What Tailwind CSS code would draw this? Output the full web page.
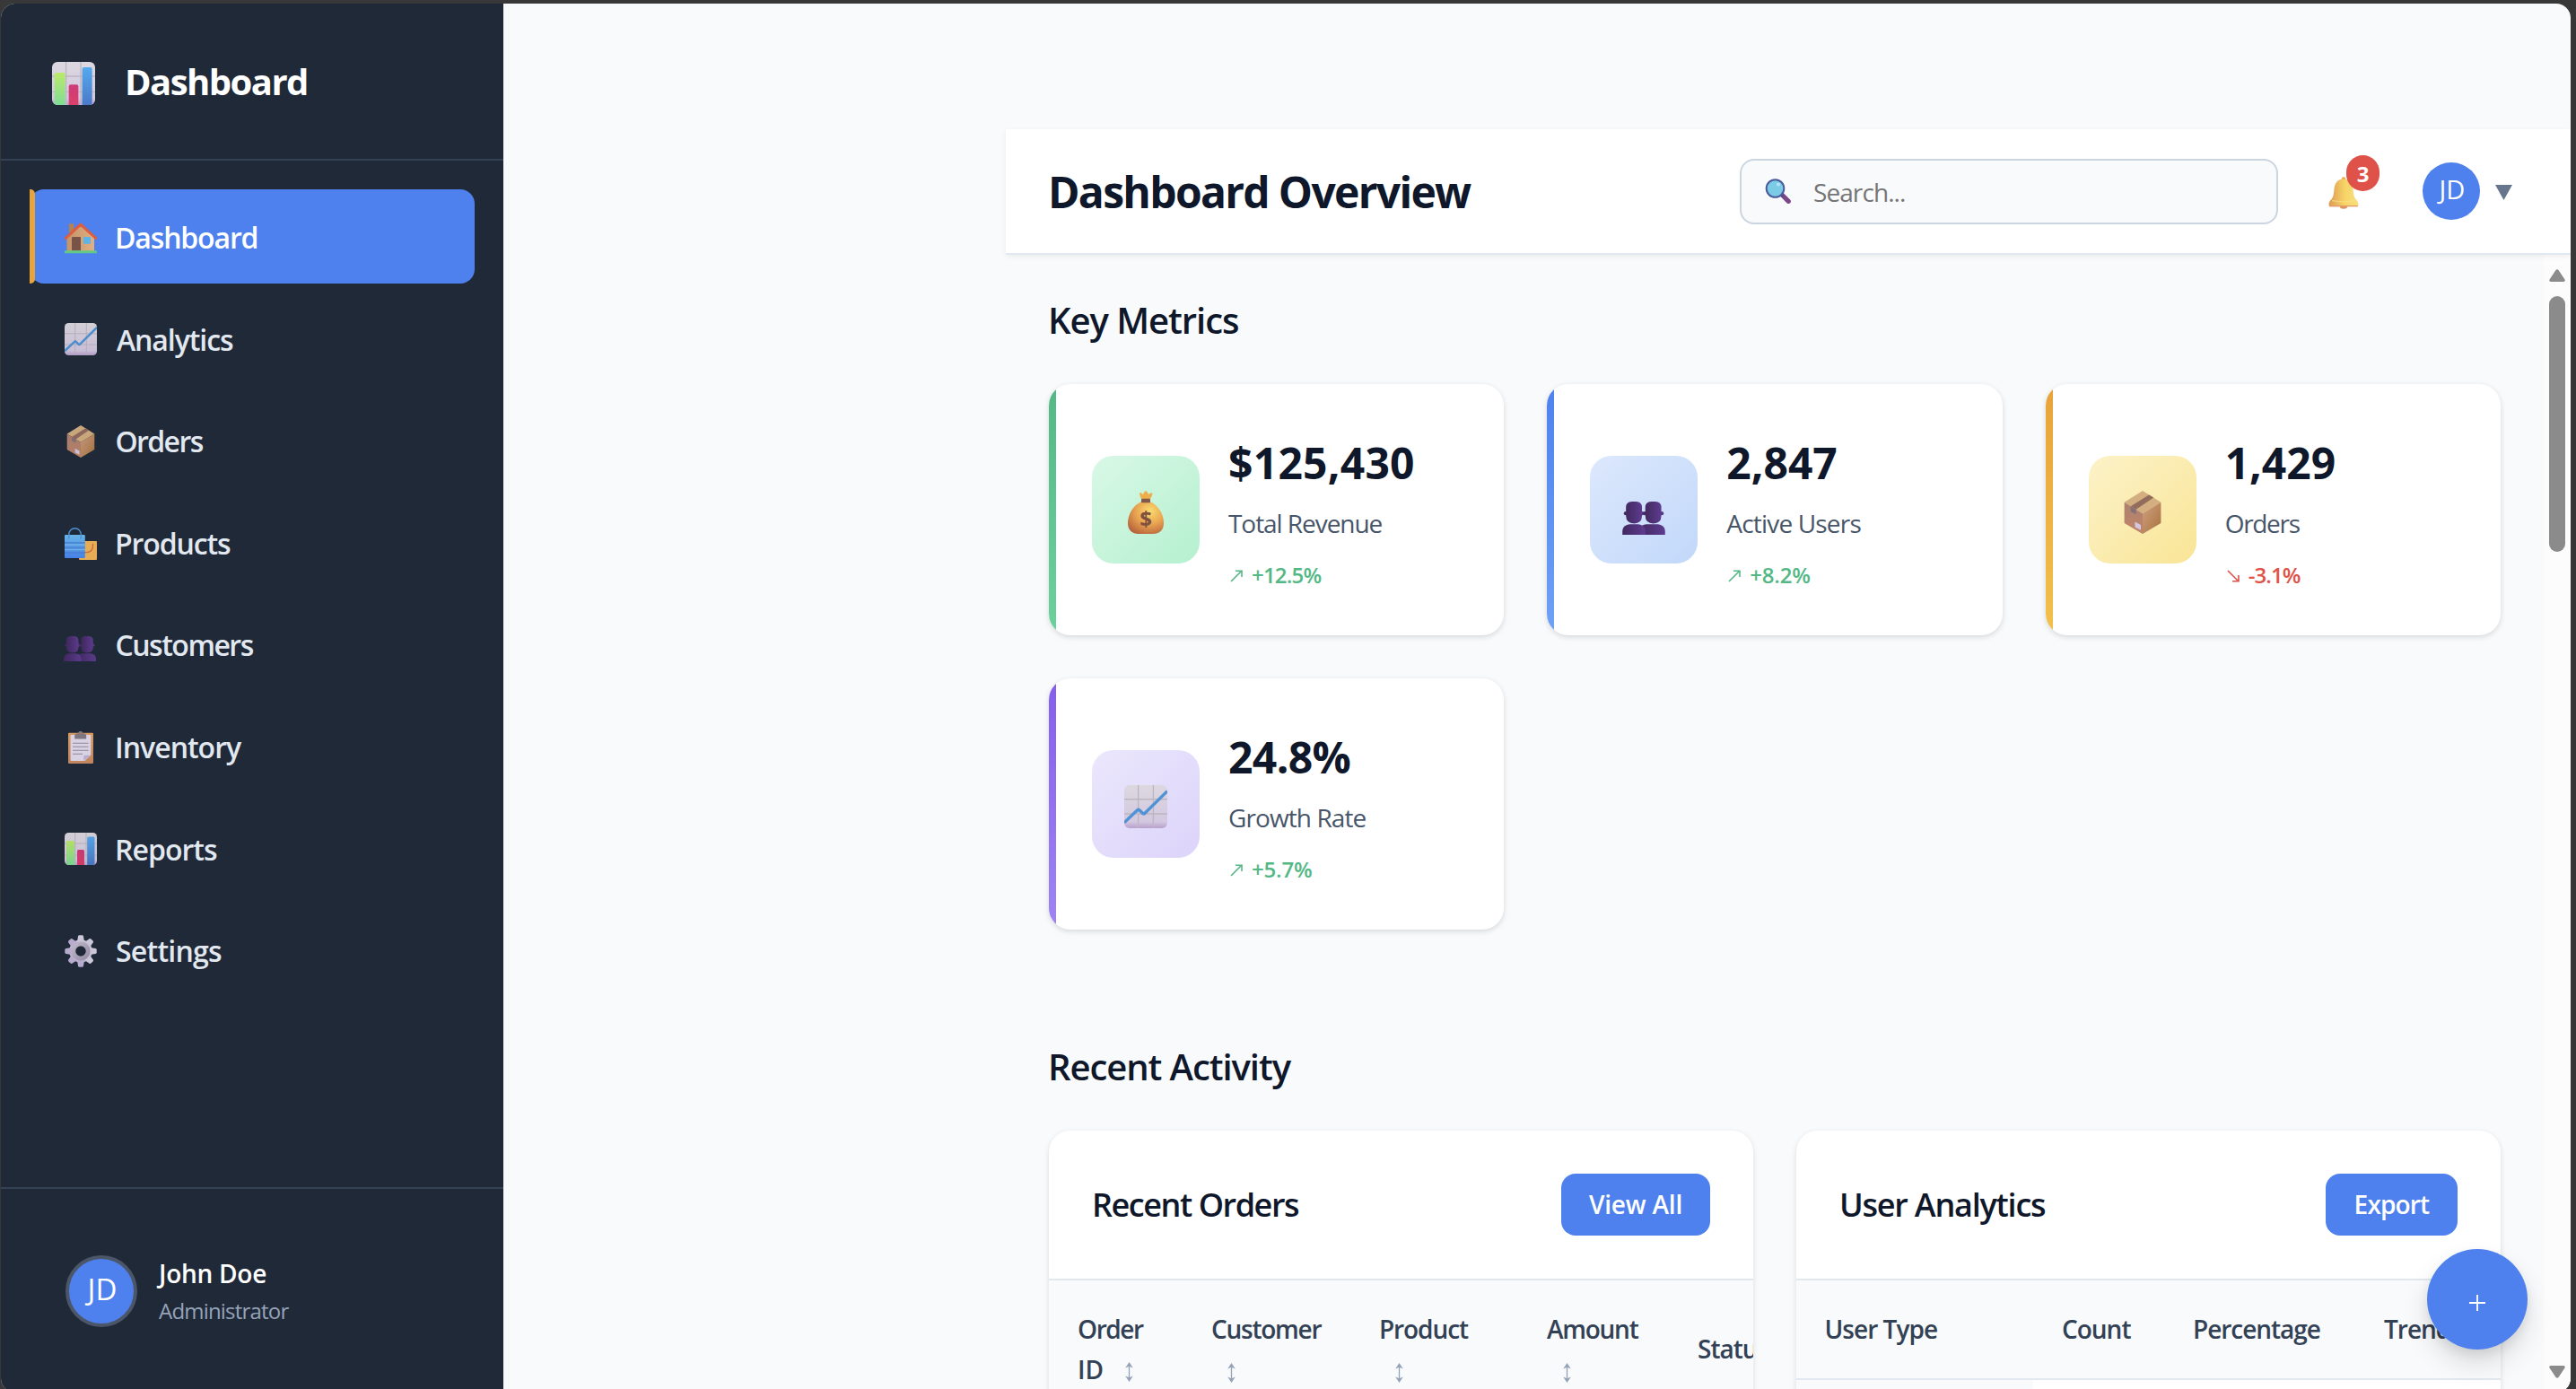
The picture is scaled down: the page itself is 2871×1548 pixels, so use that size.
<!DOCTYPE html>
<html lang="en">
<head>
<meta charset="utf-8">
<title>Dashboard</title>
<script src="https://cdn.jsdelivr.net/npm/@tailwindcss/browser@4"></script>
</head>
<body class="h-[1548px] w-[2871px] overflow-hidden bg-[#383838] pt-1 pl-px font-['Open_Sans','Noto_Sans',sans-serif] leading-[1.6] text-[#0f172a]">

<!-- Shared icon symbols -->
<svg width="0" height="0" class="absolute" aria-hidden="true">
  <defs>
    <linearGradient id="paper" x1="0" y1="0" x2="0" y2="1"><stop offset="0" stop-color="#dcd8df"/><stop offset=".85" stop-color="#d3c8e0"/><stop offset="1" stop-color="#b8a0cc"/></linearGradient>
    <linearGradient id="green" x1="0" y1="0" x2="0" y2="1"><stop offset="0" stop-color="#bbe96a"/><stop offset="1" stop-color="#7fdc95"/></linearGradient>
    <linearGradient id="red" x1="0" y1="0" x2="0" y2="1"><stop offset="0" stop-color="#cf3b78"/><stop offset="1" stop-color="#dc3f6a"/></linearGradient>
    <linearGradient id="blue" x1="0" y1="0" x2="0" y2="1"><stop offset="0" stop-color="#56a9ee"/><stop offset="1" stop-color="#4a79c9"/></linearGradient>
    <linearGradient id="wall" x1="0" y1="0" x2="1" y2="0"><stop offset="0" stop-color="#c39468"/><stop offset="1" stop-color="#e0b083"/></linearGradient>
    <linearGradient id="bag" x1="0" y1="0" x2="0" y2="1"><stop offset="0" stop-color="#6cbcf0"/><stop offset="1" stop-color="#4a86f0"/></linearGradient>
    <linearGradient id="boxL" x1="0" y1="0" x2="0" y2="1"><stop offset="0" stop-color="#ad8270"/><stop offset="1" stop-color="#c08468"/></linearGradient>
    <linearGradient id="boxR" x1="0" y1="0" x2="1" y2="1"><stop offset="0" stop-color="#cf9f80"/><stop offset="1" stop-color="#a9733f"/></linearGradient>
    <linearGradient id="person" x1="0" y1="0" x2="1" y2="0"><stop offset="0" stop-color="#42295f"/><stop offset="1" stop-color="#5d3b90"/></linearGradient>
    <linearGradient id="gear" x1="0" y1="0" x2="0" y2="1"><stop offset="0" stop-color="#d9d3e2"/><stop offset="1" stop-color="#bdafd6"/></linearGradient>
    <linearGradient id="gearIn" x1="0" y1="0" x2="1" y2="1"><stop offset="0" stop-color="#c6bfd0"/><stop offset="1" stop-color="#9d94ac"/></linearGradient>
    <linearGradient id="bell" x1="0" y1="0" x2="1" y2="0"><stop offset="0" stop-color="#dd9a52"/><stop offset=".55" stop-color="#f7d468"/><stop offset="1" stop-color="#f8e07c"/></linearGradient>
    <linearGradient id="board" x1="0" y1="0" x2="0" y2="1"><stop offset="0" stop-color="#e2a264"/><stop offset="1" stop-color="#c98a62"/></linearGradient>
    <radialGradient id="money" cx=".62" cy=".3" r=".8"><stop offset="0" stop-color="#fadc70"/><stop offset=".5" stop-color="#e9a450"/><stop offset="1" stop-color="#b4603c"/></radialGradient>
  </defs>
  <symbol id="i-bars" viewBox="0 0 36 36">
    <rect width="36" height="36" rx="4.5" fill="url(#paper)"/>
    <path d="M11.7 0v36M24 0v36M0 12h36M0 25h36" stroke="#bcb6c2" stroke-width="1"/>
    <path d="M2 10.5a1.5 1.5 0 0 1 1.5-1.5h6a1.5 1.5 0 0 1 1.5 1.5V36H4a2 2 0 0 1-2-2z" fill="url(#green)"/>
    <path d="M14 20.5a1.5 1.5 0 0 1 1.5-1.5h5a1.5 1.5 0 0 1 1.5 1.5V36h-8z" fill="url(#red)"/>
    <path d="M25.2 6a1.5 1.5 0 0 1 1.5-1.5h5.3a1.5 1.5 0 0 1 1.5 1.5v28a2 2 0 0 1-2 2h-6.3z" fill="url(#blue)"/>
  </symbol>
  <symbol id="i-line" viewBox="0 0 36 36">
    <rect width="36" height="36" rx="4.5" fill="url(#paper)"/>
    <path d="M11.7 0v36M24.3 0v36M0 11.8h36M0 24h36" stroke="#bcb6c2" stroke-width="1"/>
    <path d="M0 31.3 11 20.800q.8-.8 1.600 0l2.900 2.800q.8.800 1.600 0L36 5" fill="none" stroke="#4f93d6" stroke-width="2.500"/>
  </symbol>
  <symbol id="i-home" viewBox="0 0 36 36">
    <path d="M5 2q0-.8.800-.8h3.700q.8 0 .8.800v9H5z" fill="#b5814f"/>
    <path d="M2.500 15 18 2l15 13v18H2.500z" fill="url(#wall)"/>
    <rect x="8" y="16" width="10" height="15.500" rx="1" fill="#7a5348"/>
    <rect x="21" y="16" width="8" height="7.800" rx=".8" fill="#5bb4ea"/>
    <path d="M1.200 17.500 17.900 2.200 34.800 17.500" fill="none" stroke="#df5c3d" stroke-width="3" stroke-linecap="round" stroke-linejoin="round"/>
    <rect y="31.300" width="36" height="2.900" rx="1" fill="#63c987"/>
  </symbol>
  <symbol id="i-box" viewBox="0 0 36 36">
    <path d="M18 0 33.300 9.500 18 19 2.700 9.500z" fill="#d3ae80"/>
    <path d="M2.700 9.500 18 19v17L2.700 27z" fill="url(#boxL)"/>
    <path d="M33.300 9.500 18 19v17l15.300-9z" fill="url(#boxR)"/>
    <path d="M23.300 3.300 27.200 5.600 12.500 15.600 8 13z" fill="#936c5c"/>
    <path d="M8 13l4.500 2.600v4L8 17.300z" fill="#857078"/>
    <path d="M11.600 25.800l4.900 2.700v4.300l-4.900-2.500z" fill="#d3c8e0"/>
  </symbol>
  <symbol id="i-bags" viewBox="0 0 36 36">
    <rect x="16" y="15" width="20" height="21" rx="1" fill="#f1b458"/>
    <path d="M22.500 27.500q9.500 1 9-9" fill="none" stroke="#dc6a3e" stroke-width="1.300" stroke-linecap="round"/>
    <rect y="8" width="22.800" height="26" rx="1" fill="url(#bag)"/>
    <path d="M0 17h22.800M0 22.500h22.800M0 28h22.800" stroke="#4a82dc" stroke-width="1.800" opacity=".7"/>
    <path d="M0 19h22.800M0 24.500h22.800" stroke="#7cc4f4" stroke-width="1.600" opacity=".7"/>
    <path d="M4.800 12V7.500a6.700 6.700 0 0 1 13.400 0V12" fill="none" stroke="#4f97dc" stroke-width="1.400" stroke-linecap="round"/>
  </symbol>
  <symbol id="i-people" viewBox="0 0 36 28">
    <path d="M14 28v-2.500c0-4 2.500-6 6.500-6.300h9c4 .3 6.500 2.300 6.500 6.300V28z" fill="url(#person)"/>
    <path d="M0 28v-2.500c0-4 2.500-6 6.500-6.300h6.500c4 .3 6.500 2.300 6.500 6.300V28z" fill="url(#person)"/>
    <circle cx="2.800" cy="10" r="1.600" fill="#42295f"/><circle cx="16.800" cy="10" r="1.600" fill="#553684"/><circle cx="19" cy="10" r="1.600" fill="#42295f"/><circle cx="33.200" cy="10" r="1.600" fill="#553684"/>
    <path d="M3 5q0-5 5-5h3.500q5 0 5 5v7q0 6.500-6.700 6.500T3 12z" fill="url(#person)"/>
    <path d="M19.300 5q0-5 5-5h3.500q5 0 5 5v7q0 6.500-6.700 6.500T19.300 12z" fill="url(#person)"/>
  </symbol>
  <symbol id="i-clip" viewBox="0 0 36 36">
    <rect x="4" y="1.800" width="28" height="34.200" rx="1.300" fill="url(#board)"/>
    <path d="M6.600 5q0-1 1-1h20.700q1 0 1 1v21.500L22.500 33H7.600q-1 0-1-1z" fill="#e3dcee"/>
    <path d="M21.300 33v-5q0-1.300 1.300-1.300h6.700z" fill="#c3b4da"/>
    <path d="M9 13.300h17.500M9 17.300h17.500M9 21.300h17.500M9 25.300h11" stroke="#938c9b" stroke-width="1.100"/>
    <path d="M11.200 8.500V5q0-2.500 2.500-2.500h1.300a2.700 2.700 0 0 1 5.400 0h1.300q2.500 0 2.500 2.500v3.500z" fill="#857c83"/>
    <circle cx="17.700" cy="2.400" r="1.100" fill="#b0855f"/>
  </symbol>
  <symbol id="i-gear" viewBox="0 0 36 36">
    <g fill="url(#gear)">
      <circle cx="18" cy="18" r="12.800"/>
      <g id="teeth"><path d="M14 8 15 1.500Q15.300.3 16.500.3h3q1.200 0 1.500 1.200L22 8v20l-1 6.500q-.3 1.200-1.500 1.200h-3q-1.200 0-1.500-1.200L14 28z"/></g>
      <use href="#teeth" transform="rotate(45 18 18)"/><use href="#teeth" transform="rotate(90 18 18)"/><use href="#teeth" transform="rotate(135 18 18)"/>
    </g>
    <circle cx="18" cy="18" r="8.300" fill="none" stroke="url(#gearIn)" stroke-width="4.600"/>
    <circle cx="18" cy="18" r="5.800" fill="#202938"/>
  </symbol>
</svg>

<div class="relative flex h-[1548px] w-[2864px] overflow-hidden rounded-2xl bg-[#f8fafc]">

  <!-- Sidebar -->
  <aside class="flex w-[560px] shrink-0 flex-col bg-[#202938]">
    <div class="flex h-[174.800px] items-center border-b-2 border-[#334155] pl-[57px]">
      <svg class="mt-[6px] size-12"><use href="#i-bars"/></svg>
      <span class="ml-[33px] pt-[2px] text-[40px] font-bold tracking-[-1.540px] text-white">Dashboard</span>
    </div>
    <nav class="flex flex-1 flex-col gap-2 px-8 pt-8 text-[32px] font-semibold text-[#e2e8f0]">
      <a class="relative flex h-[105.600px] items-center rounded-2xl bg-[#4e81ee] pl-[39px] text-white">
        <!-- Active marker; the dark strip squares off the item's left edge -->
        <span class="absolute inset-y-0 left-0 w-[6px] bg-[#202938]"></span>
        <span class="absolute inset-y-0 left-0 w-[6px] rounded-r-[5px] bg-[#e8a33a]"></span>
        <svg class="mt-[5px] size-9"><use href="#i-home"/></svg><span class="ml-[20px] pt-[2px] tracking-[-1.150px]">Dashboard</span>
      </a>
      <a class="flex h-[105.600px] items-center pl-[39px]"><svg class="mt-[2px] size-9 opacity-95"><use href="#i-line"/></svg><span class="ml-[22px] pt-[2px] tracking-[-1.070px]">Analytics</span></a>
      <a class="flex h-[105.600px] items-center pl-[39px]"><svg class="mt-[3px] size-9 opacity-95"><use href="#i-box"/></svg><span class="ml-[20.500px] pt-[2px] tracking-[-1.600px]">Orders</span></a>
      <a class="flex h-[105.600px] items-center pl-[39px]"><svg class="mt-[3px] size-9 opacity-95"><use href="#i-bags"/></svg><span class="ml-[20px] pt-[2px] tracking-[-1.120px]">Products</span></a>
      <a class="flex h-[105.600px] items-center pl-[38px]"><svg class="mt-[11px] h-7 w-9 opacity-95"><use href="#i-people"/></svg><span class="ml-[21.500px] pt-[2px] tracking-[-1.500px]">Customers</span></a>
      <a class="flex h-[105.600px] items-center pl-[39px]"><svg class="mt-[3px] size-9 opacity-95"><use href="#i-clip"/></svg><span class="ml-[20px] pt-[2px] tracking-[-1px]">Inventory</span></a>
      <a class="flex h-[105.600px] items-center pl-[39px]"><svg class="mt-[2px] size-9 opacity-95"><use href="#i-bars"/></svg><span class="ml-[20px] pt-[2px] tracking-[-0.970px]">Reports</span></a>
      <a class="flex h-[105.600px] items-center pl-[39px]"><svg class="mt-[2px] size-9 opacity-95"><use href="#i-gear"/></svg><span class="ml-[21px] pt-[1px] tracking-[-0.760px]">Settings</span></a>
    </nav>
    <div class="flex h-[229px] items-center border-t-2 border-[#334155] pl-[72px]">
      <div class="flex size-20 items-center justify-center rounded-full border-4 border-[#4b5668] bg-[#4e81ee] pb-[2px] pl-[2px] text-[33px] text-white">JD</div>
      <div class="ml-6">
        <div class="text-[28px] font-semibold tracking-[-0.250px] text-white">John Doe</div>
        <div class="text-[24px] tracking-[-0.800px] text-[#94a3b8]">Administrator</div>
      </div>
    </div>
  </aside>

  <!-- Main column -->
  <main class="ml-[560px] flex flex-1 flex-col pt-[140px]">
    <header class="z-10 flex h-[140px] shrink-0 items-center border-b-2 border-[#e2e8f0] bg-white pr-[65px] pl-12 shadow-[0_2px_6px_rgba(0,0,0,0.06)]">
      <h1 class="mr-auto -ml-px pt-[3px] text-[48px] font-bold tracking-[-1.680px]">Dashboard Overview</h1>
      <div class="flex h-[73px] w-[600px] items-center rounded-2xl border-2 border-[#cbd5e1] bg-[#f8fafc] pl-[26px]">
        <svg class="h-[28px] w-[30px]" viewBox="0 0 30 28">
          <path d="M19.500 18.500 26.300 25.300" stroke="#7b4a86" stroke-width="5.200" stroke-linecap="round"/>
          <path d="M17 17l3 3" stroke="#5a4a86" stroke-width="3"/>
          <circle cx="11.500" cy="11" r="9.800" fill="#7ccbe6" stroke="#4a5a9c" stroke-width="2"/>
          <circle cx="15" cy="6.500" r="2" fill="#b4e3f3"/>
        </svg>
        <span class="ml-[24px] pt-[2px] text-[28px] tracking-[-0.920px] text-[#757575]">Search...</span>
      </div>
      <div class="relative ml-[56px] w-[34px]">
        <svg class="mt-[4px] h-9 w-[34px]" viewBox="0 0 34 36">
          <ellipse cx="17" cy="33.500" rx="4" ry="2.200" fill="#dd8f5c"/>
          <circle cx="17" cy="2.500" r="2.200" fill="#e2ac4e"/>
          <path d="M17 2.500c6.500 0 10 4.500 10.500 11 .5 6 1 9 3 11.500 2 1.500 3 3.500 3 6 0 1.500-1 2.300-2.500 2.300H3C1.500 33.300.5 32.500.5 31c0-2.500 1-4.500 3-6 2-2.500 2.500-5.500 3-11.500.5-6.500 4-11 10.500-11z" fill="url(#bell)"/>
          <path d="M1.500 32.600h31" stroke="#e29a6c" stroke-width="1.300" stroke-linecap="round"/>
          <path d="M4 26.500q13 2.500 26 0" fill="none" stroke="#fbe584" stroke-width="1.500" opacity=".6"/>
        </svg>
        <span class="absolute -top-[20px] left-[20px] flex h-10 w-[37px] items-center justify-center rounded-[20px] bg-[#de524a] pt-[2px] text-[24px] font-bold text-white">3</span>
      </div>
      <div class="ml-[71px] flex size-16 items-center justify-center rounded-full bg-[#4e81ee] pb-[3px] pl-[2px] text-[29px] text-white">JD</div>
      <svg class="mt-[3px] ml-[17px] h-[17px] w-[19px]" viewBox="0 0 19 17"><path d="M0 0h19L9.500 17z" fill="#67768c"/></svg>
    </header>

    <div class="flex h-[1268px]">
      <div class="flex-1 overflow-hidden px-12 pt-12">
        <h2 class="-ml-[1px] pt-[1px] text-[40px] leading-[47px] font-semibold tracking-[-1.040px]">Key Metrics</h2>
        <section class="mt-12 grid grid-cols-3 gap-12">
          <article class="rounded-3xl bg-white shadow-[0_2px_6px_rgba(0,0,0,0.14)]">
            <div class="relative flex h-[280px] items-center overflow-hidden rounded-3xl pl-12">
              <span class="absolute inset-y-0 left-0 w-2 bg-linear-to-b from-[#54b886] to-[#6cd29c]"></span>
              <div class="flex size-[120px] items-center justify-center rounded-3xl bg-linear-135 from-[#d8f8e6] to-[#b5f0d0]">
                <svg class="mt-[6px] h-12 w-10" viewBox="0 0 40 48">
                  <path d="M13 2.500q1-1 2.500.5l1.500 1 1.500-3Q20-.5 21.500 1L23 4l1.500-1q2-1.500 3 0Q27 6 24.500 10h-9Q13 6 13 2.500z" fill="#efae4c"/>
                  <path d="M15.500 12h9C34 16 40 26 40 36c0 8-5 12-12 12H12C5 48 0 44 0 36 0 26 6 16 15.500 12z" fill="url(#money)"/>
                  <rect x="15" y="8.800" width="10" height="4.400" rx="1" fill="#85594a"/>
                  <text x="20" y="40" text-anchor="middle" font-family="Open Sans" font-size="24" font-weight="700" fill="#80503f">$</text>
                </svg>
              </div>
              <div class="ml-8">
                <div class="mb-2 h-[76.800px] pt-[2px] text-[48px] font-bold tracking-[0.250px]">$125,430</div>
                <div class="mb-4 text-[28px] tracking-[-1.050px] text-[#475569]">Total Revenue</div>
                <div class="flex items-center text-[24px] font-semibold tracking-[-0.790px] text-[#54b886]"><svg class="mt-[3px] ml-[2px] size-[14px]" viewBox="0 0 14 14" fill="none" stroke="currentColor" stroke-width="1.600"><path d="M1 13 13 1M6 1.200h7V8"/></svg><span class="ml-[10px]">+12.5%</span></div>
              </div>
            </div>
          </article>
          <article class="rounded-3xl bg-white shadow-[0_2px_6px_rgba(0,0,0,0.14)]">
            <div class="relative flex h-[280px] items-center overflow-hidden rounded-3xl pl-12">
              <span class="absolute inset-y-0 left-0 w-2 bg-linear-to-b from-[#4e81ee] to-[#6fa1f5]"></span>
              <div class="flex size-[120px] items-center justify-center rounded-3xl bg-linear-135 from-[#dce8fc] to-[#c2d8fa]">
                <svg class="mt-[19px] h-[37px] w-12"><use href="#i-people"/></svg>
              </div>
              <div class="ml-8">
                <div class="mb-2 h-[76.800px] pt-[2px] text-[48px] font-bold">2,847</div>
                <div class="mb-4 text-[28px] tracking-[-0.820px] text-[#475569]">Active Users</div>
                <div class="flex items-center text-[24px] font-semibold tracking-[-0.200px] text-[#54b886]"><svg class="mt-[3px] ml-[2px] size-[14px]" viewBox="0 0 14 14" fill="none" stroke="currentColor" stroke-width="1.600"><path d="M1 13 13 1M6 1.200h7V8"/></svg><span class="ml-[10px]">+8.2%</span></div>
              </div>
            </div>
          </article>
          <article class="rounded-3xl bg-white shadow-[0_2px_6px_rgba(0,0,0,0.14)]">
            <div class="relative flex h-[280px] items-center overflow-hidden rounded-3xl pl-12">
              <span class="absolute inset-y-0 left-0 w-2 bg-linear-to-b from-[#e8a33a] to-[#f2c14b]"></span>
              <div class="flex size-[120px] items-center justify-center rounded-3xl bg-linear-135 from-[#fcf2c8] to-[#f9e596]">
                <svg class="mt-[6px] size-12"><use href="#i-box"/></svg>
              </div>
              <div class="ml-8">
                <div class="mb-2 h-[76.800px] pt-[2px] text-[48px] font-bold">1,429</div>
                <div class="mb-4 text-[28px] tracking-[-1.300px] text-[#475569]">Orders</div>
                <div class="flex items-center text-[24px] font-semibold tracking-[-0.900px] text-[#de524a]"><svg class="mt-[3px] ml-[2px] size-[14px]" viewBox="0 0 14 14" fill="none" stroke="currentColor" stroke-width="1.600"><path d="M1 1 13 13M6 12.800h7V6"/></svg><span class="ml-[10px]">-3.1%</span></div>
              </div>
            </div>
          </article>
          <article class="rounded-3xl bg-white shadow-[0_2px_6px_rgba(0,0,0,0.14)]">
            <div class="relative flex h-[280px] items-center overflow-hidden rounded-3xl pl-12">
              <span class="absolute inset-y-0 left-0 w-2 bg-linear-to-b from-[#845eec] to-[#a084f3]"></span>
              <div class="flex size-[120px] items-center justify-center rounded-3xl bg-linear-135 from-[#ebe7fc] to-[#dcd4fa]">
                <svg class="mt-[6px] size-12"><use href="#i-line"/></svg>
              </div>
              <div class="ml-8">
                <div class="mb-2 h-[76.800px] pt-[2px] text-[48px] font-bold tracking-[-0.600px]">24.8%</div>
                <div class="mb-4 text-[28px] tracking-[-0.910px] text-[#475569]">Growth Rate</div>
                <div class="flex items-center text-[24px] font-semibold tracking-[-0.200px] text-[#54b886]"><svg class="mt-[3px] ml-[2px] size-[14px]" viewBox="0 0 14 14" fill="none" stroke="currentColor" stroke-width="1.600"><path d="M1 13 13 1M6 1.200h7V8"/></svg><span class="ml-[10px]">+5.7%</span></div>
              </div>
            </div>
          </article>
        </section>

        <h2 class="mt-32 -ml-[1px] pt-[1px] text-[40px] leading-[47px] font-semibold tracking-[-1.080px]">Recent Activity</h2>
        <section class="mt-12 grid grid-cols-2 gap-12">
          <article class="h-[400px] overflow-hidden rounded-t-3xl bg-white shadow-[0_2px_6px_rgba(0,0,0,0.12)]">
            <div class="flex h-[167px] items-center justify-between border-b-2 border-[#e2e8f0] px-12">
              <h3 class="pt-[1px] text-[36px] font-semibold tracking-[-1.450px]">Recent Orders</h3>
              <button class="h-[69px] w-[166px] rounded-2xl bg-[#4e81ee] text-[28px] font-semibold tracking-[-0.200px] text-white">View All</button>
            </div>
            <div class="grid h-[160px] w-[900px] grid-cols-[149px_187px_187px_168px_209px] bg-[#f8fafc] text-[28px] leading-[44.800px] font-semibold text-[#334155]">
              <div class="pt-[32px] pl-[32px] tracking-[-1.400px]">Order<div class="flex items-center"><span class="tracking-normal">ID</span><svg class="mt-[5px] ml-[23px] h-[22px] w-[11px]" viewBox="0 0 11 22"><path d="M5.500 2v18" stroke="#94a3b8" stroke-width="1.300"/><path d="M5.500 0 9.800 6.500 5.500 4.800 1.200 6.500zM5.500 22 9.800 15.500 5.500 17.200 1.200 15.500z" fill="#94a3b8"/></svg></div></div>
              <div class="pt-[32px] pl-[32px] tracking-[-1.250px]">Customer<svg class="mt-[15px] ml-[17px] h-[22px] w-[11px]" viewBox="0 0 11 22"><path d="M5.500 2v18" stroke="#94a3b8" stroke-width="1.300"/><path d="M5.500 0 9.800 6.500 5.500 4.800 1.200 6.500zM5.500 22 9.800 15.500 5.500 17.200 1.200 15.500z" fill="#94a3b8"/></svg></div>
              <div class="pt-[32px] pl-[32px] tracking-[-1.090px]">Product<svg class="mt-[15px] ml-[17px] h-[22px] w-[11px]" viewBox="0 0 11 22"><path d="M5.500 2v18" stroke="#94a3b8" stroke-width="1.300"/><path d="M5.500 0 9.800 6.500 5.500 4.800 1.200 6.500zM5.500 22 9.800 15.500 5.500 17.200 1.200 15.500z" fill="#94a3b8"/></svg></div>
              <div class="pt-[32px] pl-[32px] tracking-[-1.250px]">Amount<svg class="mt-[15px] ml-[17px] h-[22px] w-[11px]" viewBox="0 0 11 22"><path d="M5.500 2v18" stroke="#94a3b8" stroke-width="1.300"/><path d="M5.500 0 9.800 6.500 5.500 4.800 1.200 6.500zM5.500 22 9.800 15.500 5.500 17.200 1.200 15.500z" fill="#94a3b8"/></svg></div>
              <div class="pt-[54px] pl-[32px] tracking-[-1px]">Status</div>
            </div>
          </article>
          <article class="h-[400px] overflow-hidden rounded-t-3xl bg-white shadow-[0_2px_6px_rgba(0,0,0,0.12)]">
            <div class="flex h-[167px] items-center justify-between border-b-2 border-[#e2e8f0] px-12">
              <h3 class="pt-[1px] text-[36px] font-semibold tracking-[-1.220px]">User Analytics</h3>
              <button class="h-[69px] w-[147px] rounded-2xl bg-[#4e81ee] text-[28px] font-semibold tracking-[-0.830px] text-white">Export</button>
            </div>
            <div class="grid h-[111px] grid-cols-[264px_146px_213px_162px] border-b-2 border-[#e2e8f0] bg-[#f8fafc] pt-[32px] text-[28px] leading-[44.800px] font-semibold text-[#334155]">
              <div class="pl-[31.500px] tracking-[-0.960px]">User Type</div>
              <div class="pl-[32px] tracking-[-1px]">Count</div>
              <div class="pl-[32px] tracking-[-1.050px]">Percentage</div>
              <div class="pl-[32px] tracking-[-1px]">Trend</div>
            </div>
            <div class="h-12 w-[264px] bg-[#f8fafc]"></div>
          </article>
        </section>
      </div>

      <!-- Scrollbar -->
      <div class="flex w-[30px] flex-col items-center bg-[#fcfcfc] py-4">
        <svg class="h-[14px] w-[18px]" viewBox="0 0 18 14"><path d="M7.500 1q1.500-1.500 3 0l7 10.500q.8 2.500-1.500 2.500H2Q-.3 14 .5 11.500z" fill="#8b8b8b"/></svg>
        <div class="mt-4 h-[285px] w-[18px] rounded-full bg-[#8b8b8b]"></div>
        <svg class="mt-auto h-[14px] w-[18px]" viewBox="0 0 18 14"><path d="M7.500 13q1.500 1.500 3 0l7-10.500Q18.300 0 16 0H2Q-.3 0 .5 2.500z" fill="#8b8b8b"/></svg>
      </div>
    </div>
  </main>

  <!-- Floating action button -->
  <button class="absolute top-[1388px] left-[2704px] z-20 flex size-28 items-center justify-center rounded-full bg-[#4e81ee] shadow-[0_16px_30px_rgba(0,0,0,0.12),0_6px_12px_rgba(0,0,0,0.08)]">
    <svg class="mt-[8px] size-[18px]" viewBox="0 0 18 18"><path d="M9 0v18M0 9h18" stroke="#fff" stroke-width="1.800"/></svg>
  </button>
</div>
</body>
</html>
